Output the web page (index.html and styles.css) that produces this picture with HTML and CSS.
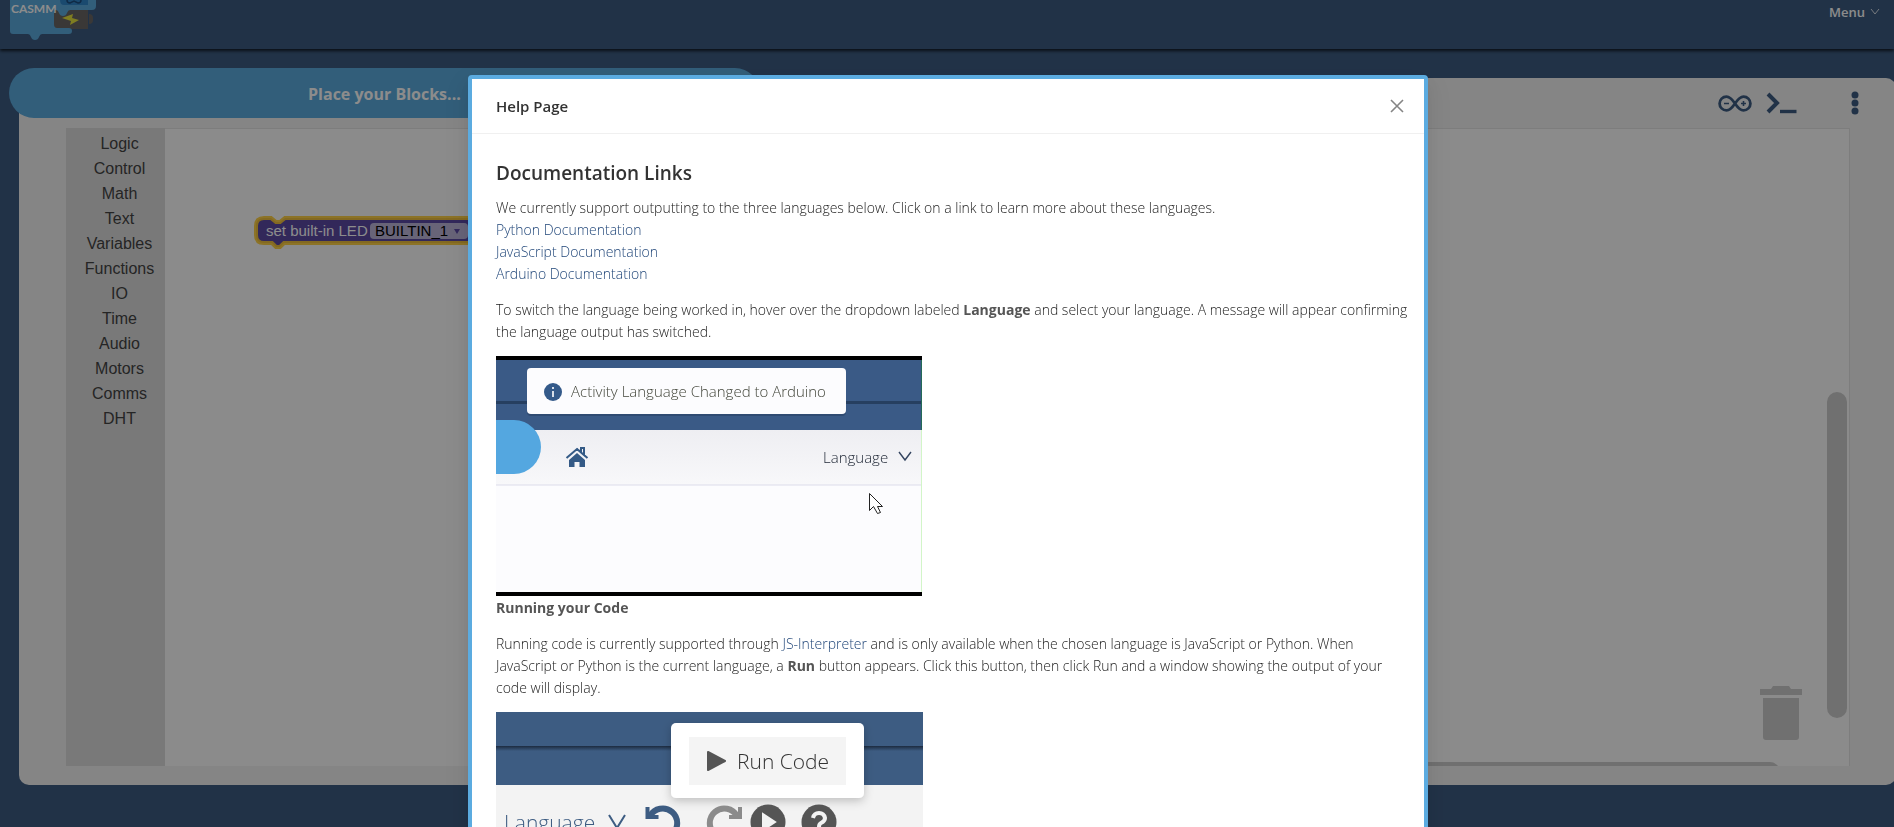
FILE: index.html
```html
<!DOCTYPE html>
<html lang="en">
<head>
<meta charset="utf-8">
<title>CASMM</title>
<link rel="stylesheet" href="styles.css">
</head>
<body>
<header class="navbar">
  <a class="logo" href="#" aria-label="CASMM home">
    <svg width="90" height="42" viewBox="0 0 90 42">
      <path d="M44 8h34v21H48q-4 0-4-4z" fill="#6a6765"/>
      <path d="M79 14q4 0 4 4v2q0 4-4 4z" fill="#6a6765"/>
      <path d="M0 0h86v6q0 4-4 4H60q-2 0-3 3t-4 3q-3 0-4-3t-3-3h-2v14q0 4 3 4h12q3 0 3 3t-3 3H32q-2 0-3 3t-4 3q-3 0-4-3T18 34H3q-3 0-3-3z" fill="#5babde"/>
      <path d="M50 0h28v5H54q-4 0-4-5z" fill="#3187cb"/>
      <path d="M57 0q0 3 3 3l4-2 4 2q3 0 3-3" fill="none" stroke="#1c4f80" stroke-width="1.500"/>
      <path d="M52 18l11-4-1 4 7 2-9 5 1-4z" fill="#e8e33c"/>
      <text x="1" y="13" class="logo-text">CASMM</text>
    </svg>
  </a>
  <button class="menu" type="button">Menu
    <svg width="10" height="8" viewBox="0 0 10 8"><path d="M1 1l4 5 4-5" fill="none" stroke="#fff" stroke-opacity=".8"/></svg>
  </button>
</header>

<main class="page">
  <section class="panel">
    <h1 class="banner">Place your Blocks...</h1>
    <div class="toolbar">
      <button class="tool" type="button" aria-label="Arduino">
        <svg width="34" height="17" viewBox="0 0 34 17" fill="none" stroke="#3d5c82" stroke-width="2.800"><path d="M17 8.500C14 4 12 1.600 8.500 1.600a6.900 6.900 0 0 0 0 13.800C12 15.400 14 13 17 8.500S22 1.600 25.500 1.600a6.900 6.900 0 0 1 0 13.800C22 15.400 20 13 17 8.500z"/><path d="M6 8.500h5M23 8.500h5M25.500 6v5" stroke-width="1.600"/></svg>
      </button>
      <button class="tool" type="button" aria-label="Console">
        <svg width="31" height="22" viewBox="0 0 31 22" fill="none" stroke="#3d5c82"><path d="M2 2l9 9-9 9" stroke-width="4"/><path d="M14 19.500h16.500" stroke-width="3.400"/></svg>
      </button>
      <button class="tool more" type="button" aria-label="More">
        <svg width="8" height="24" viewBox="0 0 8 24" fill="#3d5c82"><circle cx="4" cy="4" r="3.500"/><circle cx="4" cy="12" r="3.500"/><circle cx="4" cy="20" r="3.500"/></svg>
      </button>
    </div>
    <div class="editor">
      <ul class="toolbox">
        <li>Logic</li><li>Control</li><li>Math</li><li>Text</li><li>Variables</li><li>Functions</li><li>IO</li><li>Time</li><li>Audio</li><li>Motors</li><li>Comms</li><li>DHT</li>
      </ul>
      <div class="workspace">
        <svg class="block" width="310" height="36" viewBox="0 0 310 36">
          <path d="M10 3h7l5 4h4l5-4h275v25H30l-4 4h-4l-4-4h-8q-8 0-8-8v-9q0-8 8-8z" fill="#5b49a5" stroke="#fc3" stroke-opacity=".9" stroke-width="4"/>
          <rect x="116" y="8" width="98" height="16" rx="4" fill="#fff" fill-opacity=".6"/>
          <text x="12" y="21" class="block-text">set built-in LED</text>
          <text x="121" y="21" class="block-text field">BUILTIN_1</text>
          <path d="M200 14h6l-3 5z" fill="#5b49a5"/>
        </svg>
        <svg class="trash" width="42" height="54" viewBox="0 0 42 54" fill="#ccc"><path d="M0 3h11l2-3h16l2 3h11v6H0zM3 12h36v39q0 3-3 3H6q-3 0-3-3z"/></svg>
        <div class="scroll-y"></div>
        <div class="scroll-x"></div>
      </div>
    </div>
  </section>
</main>

<div class="mask"></div>
<div class="modal-wrap">
  <section class="modal" role="dialog" aria-labelledby="help-title">
    <header class="modal-header">
      <h2 id="help-title" class="modal-title">Help Page</h2>
      <button class="close" type="button" aria-label="Close"><svg width="14" height="14" viewBox="0 0 14 14"><path d="M1 1l12 12M13 1L1 13" stroke="#858585" stroke-width="1.600"/></svg></button>
    </header>
    <div class="modal-body">
      <h3 class="heading">Documentation Links</h3>
      <p class="text">We currently support outputting to the three languages below. Click on a link to learn more about these languages.<br>
        <a href="#">Python Documentation</a><br><a href="#">JavaScript Documentation</a><br><a href="#">Arduino Documentation</a></p>
      <p class="text">To switch the language being worked in, hover over the dropdown labeled <strong>Language</strong> and select your language. A message will appear confirming the language output has switched.</p>
      <svg class="shot" width="426" height="240" viewBox="0 0 426 240" role="img" aria-label="Changing the activity language">
        <defs><linearGradient id="bar" x1="0" y1="0" x2="0" y2="1"><stop offset="0" stop-color="#eeeef2"/><stop offset="1" stop-color="#f8f8fa"/></linearGradient></defs>
        <rect width="426" height="240"/>
        <rect y="4" width="426" height="232" fill="#fcfcfe"/>
        <rect y="4" width="426" height="70" fill="#3a5a86"/>
        <rect y="45" width="426" height="3" fill="#263f60"/>
        <rect y="74" width="426" height="55" fill="url(#bar)"/>
        <path d="M0 129h426" stroke="#dcdcea"/>
        <path d="M425.500 4v232" stroke="#d2f5c8"/>
        <path d="M425.500 4v70" stroke="#246a58"/>
        <path d="M0 64h18a27 27 0 0 1 0 54H0z" fill="#54a7e0"/>
        <rect x="31" y="14" width="319" height="46" rx="4" fill="#1d304c" opacity=".35"/>
        <rect x="31" y="12" width="319" height="46" rx="4" fill="#fcfcfe"/>
        <circle cx="57" cy="36" r="9" fill="#345a8a"/>
        <path d="M57 35v6M57 31v2" stroke="#fff" stroke-width="1.600"/>
        <text x="75" y="41" class="shot-text toast">Activity Language Changed to Arduino</text>
        <path d="M81 93l7 6v-7h-3v4zM70.500 102L81 93l10.500 9" fill="none" stroke="#345a86" stroke-width="2"/>
        <path d="M73 104l8-7 8 7v7h-5.500v-5h-5v5H73z" fill="#345a86"/>
        <text x="327" y="107" class="shot-text">Language</text>
        <path d="M403 96l6 8 6-8" fill="none" stroke="#33445f" stroke-width="1.400"/>
        <path d="M373.500 137.500v17l4-4 4 7 3-1-3-6h5z" fill="#fff" stroke="#222"/>
      </svg>
      <p class="text"><strong>Running your Code</strong></p>
      <p class="text">Running code is currently supported through <a href="#">JS-Interpreter</a> and is only available when the chosen language is JavaScript or Python. When JavaScript or Python is the current language, a <strong>Run</strong> button appears. Click this button, then click Run and a window showing the output of your code will display.</p>
      <svg class="shot" width="427" height="240" viewBox="0 0 427 240" role="img" aria-label="Run Code button">
        <defs>
          <linearGradient id="edge" x1="0" y1="0" x2="0" y2="1"><stop offset="0" stop-color="#1c2b40"/><stop offset="1" stop-color="#3d5c82"/></linearGradient>
          <filter id="soft" x="-20%" y="-20%" width="140%" height="150%"><feDropShadow dx="0" dy="3" stdDeviation="5" flood-opacity=".22"/></filter>
        </defs>
        <rect width="427" height="240" fill="#f3f3f3"/>
        <rect width="427" height="73" fill="#3d5c82"/>
        <rect y="34" width="427" height="5" fill="url(#edge)"/>
        <rect x="175" y="11" width="193" height="75" rx="5" fill="#fff" filter="url(#soft)"/>
        <rect x="193" y="25" width="157" height="48" fill="#f4f4f4"/>
        <path d="M212 40l17 9-17 9z" fill="#555" stroke="#555" stroke-width="2" stroke-linejoin="round"/>
        <text x="241" y="57" class="shot-text run">Run Code</text>
        <text x="8" y="118" class="shot-text lang">Language</text>
        <path d="M113 103l8 13 8-13" fill="none" stroke="#3d5c82" stroke-width="2"/>
        <path d="M154 104a14.500 14.500 0 1 1 0 14" fill="none" stroke="#3d5c82" stroke-width="6"/>
        <path d="M149.500 95h4v8h9v4h-13z" fill="#3d5c82"/>
        <path d="M241 104a14.500 14.500 0 1 0 0 14" fill="none" stroke="#8b8b8b" stroke-width="6"/>
        <path d="M246 95h-4v8h-9v4h13z" fill="#8b8b8b"/>
        <circle cx="272" cy="110" r="17.500" fill="#555"/><path d="M267 102l12 8-12 8z" fill="#f3f3f3" stroke="#f3f3f3" stroke-width="2"/>
        <circle cx="323" cy="110" r="17.500" fill="#555"/>
        <path d="M317 106q1-5 6-5t6 5q0 3-4 5-2 1-2 4" fill="none" stroke="#f3f3f3" stroke-width="4"/>
      </svg>
    </div>
  </section>
</div>
</body>
</html>
```
FILE: styles.css
```css
* { box-sizing: border-box; }
body {
  margin: 0;
  height: 100vh;
  overflow: hidden;
  background: #3d5c82;
  color: #222;
  font: 300 14px/22px "Open Sans", "Segoe UI", sans-serif;
}
button { border: 0; padding: 0; background: none; font: inherit; cursor: pointer; }
svg { display: block; }

.navbar {
  display: flex;
  justify-content: space-between;
  align-items: flex-start;
  height: 49px;
  padding: 0 14px 0 10px;
  box-shadow: 0 2px 3px rgba(0, 0, 0, .7);
}
.logo svg { overflow: visible; }
.logo-text { font: 700 12px Lato, sans-serif; fill: #fff; }
.menu {
  display: flex;
  align-items: center;
  gap: 5px;
  padding-top: 1px;
  color: #fff;
  font-size: 13px;
  font-weight: 600;
}

.page { padding-top: 29px; }
.panel {
  position: relative;
  height: calc(100vh - 120px);
  margin: 0 -2px 0 19px;
  padding: 0 46px 19px 47px;
  border-radius: 10px;
  background: #f3f3f3;
  display: flex;
  flex-direction: column;
}
.banner {
  position: absolute;
  top: -10px;
  left: -10px;
  width: 40%;
  height: 50px;
  margin: 0;
  border-radius: 25px;
  background: #5babde;
  color: #fff;
  font-size: 16px;
  line-height: 52px;
  text-align: center;
}
.toolbar {
  flex: none;
  height: 50px;
  display: flex;
  justify-content: flex-end;
  align-items: center;
  gap: 14px;
}
.tool { flex: none; }
.more { margin: 0 -9px 0 40px; }
.editor { flex: 1; display: flex; }
.toolbox {
  flex: none;
  width: 99px;
  margin: 0;
  padding: 3px 0 0 8px;
  list-style: none;
  background: #ddd;
  color: #444;
  text-align: center;
  font: 16px/25px "Liberation Sans", Arial, sans-serif;
}
.workspace {
  position: relative;
  flex: 1;
  overflow: hidden;
  background: #fefefe;
  border: solid #e4e4e4;
  border-width: 1px 1px 0 0;
}
.block { position: absolute; left: 89px; top: 86px; }
.block-text { font: 15px "Liberation Sans", Arial, sans-serif; fill: #fff; }
.block-text.field { fill: #000; }
.trash { position: absolute; right: 47px; bottom: 26px; }
.scroll-y, .scroll-x { position: absolute; border-radius: 10px; background: #ccc; }
.scroll-y { right: 2px; bottom: 48px; width: 20px; height: 326px; }
.scroll-x { right: 69px; bottom: -16px; width: 60%; height: 20px; }

.mask { position: fixed; inset: 0; background: rgba(0, 0, 0, .45); }
.modal-wrap {
  position: fixed;
  inset: 0;
  overflow: hidden;
  padding: 75px 14px 0 16px;
}
.modal {
  max-width: 960px;
  margin: 0 auto;
  border: 4px solid #5babe0;
  border-radius: 4px;
  background: #fff;
  box-shadow: 0 3px 6px -4px rgba(0, 0, 0, .12), 0 6px 16px rgba(0, 0, 0, .08), 0 9px 28px 8px rgba(0, 0, 0, .05);
}
.modal-header {
  display: flex;
  justify-content: space-between;
  align-items: center;
  height: 55px;
  padding: 0 16px 0 24px;
  border-bottom: 1px solid #f0f0f0;
}
.modal-title { margin: 0; color: #333; font-size: 15px; font-weight: 600; }
.close { display: grid; place-items: center; width: 22px; height: 22px; }
.modal-body { padding: 24px 16px 24px 24px; }
.heading { margin: 0 0 9px; color: #333; font-size: 19px; line-height: 30px; font-weight: 600; }
.text { margin: 0 0 14px; }
.text strong { color: #555; font-weight: 700; }
a { color: #1f4578; text-decoration: none; }
.shot { margin: -1px 0 1px; }
.shot-text { font: 300 15px "Open Sans", sans-serif; fill: #222a38; }
.shot-text.toast { fill: #44473c; }
.shot-text.run { font-size: 21px; fill: #333; }
.shot-text.lang { font-size: 21px; fill: #3d5c82; }
```
